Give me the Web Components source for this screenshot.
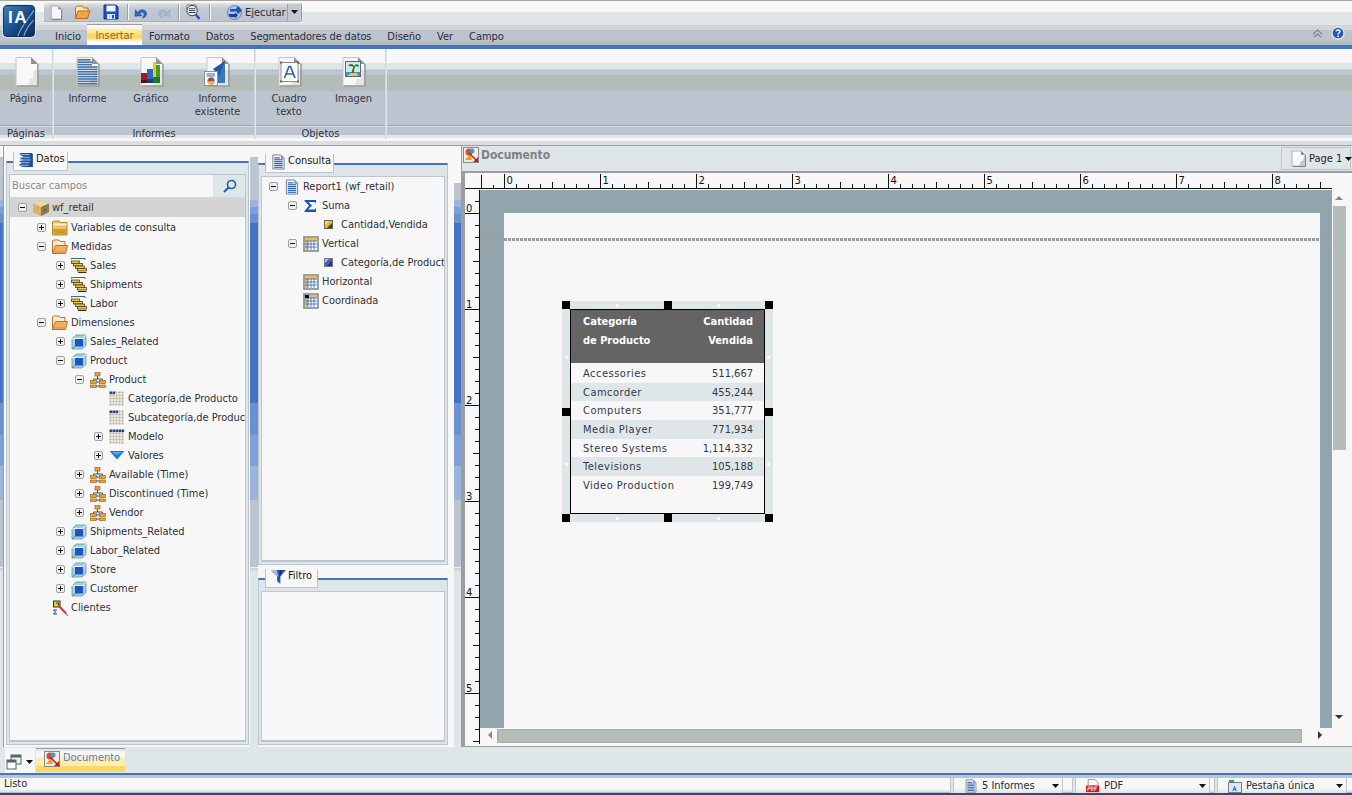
<!DOCTYPE html>
<html lang="es"><head><meta charset="utf-8"><title>InfoAssist</title>
<style>
html,body{margin:0;padding:0;background:#dfe6e8;overflow:hidden}
body{font:11px "DejaVu Sans",sans-serif;font-stretch:condensed;color:#2b2b33;letter-spacing:-.03px}
</style></head><body>
<ia-app>
  <ia-titlebar></ia-titlebar>
  <ia-ribbon></ia-ribbon>
  <ia-main>
    <ia-panel slot="left" heading="Datos" icon="db" tabw="55" search style="width:243px;margin-top:15px;height:584px">
      <ia-tree-row level="0" exp="minus" icon="cubeTan" selected>wf_retail</ia-tree-row>
      <ia-tree-row level="1" exp="plus" icon="folder">Variables de consulta</ia-tree-row>
      <ia-tree-row level="1" exp="minus" icon="folderOpen">Medidas</ia-tree-row>
      <ia-tree-row level="2" exp="plus" icon="measure">Sales</ia-tree-row>
      <ia-tree-row level="2" exp="plus" icon="measure">Shipments</ia-tree-row>
      <ia-tree-row level="2" exp="plus" icon="measure">Labor</ia-tree-row>
      <ia-tree-row level="1" exp="minus" icon="folderOpen">Dimensiones</ia-tree-row>
      <ia-tree-row level="2" exp="plus" icon="cubeBlue">Sales_Related</ia-tree-row>
      <ia-tree-row level="2" exp="minus" icon="cubeBlue">Product</ia-tree-row>
      <ia-tree-row level="3" exp="minus" icon="hier">Product</ia-tree-row>
      <ia-tree-row level="4" icon="lvl1">Categoría,de Producto</ia-tree-row>
      <ia-tree-row level="4" icon="lvl2">Subcategoría,de Producto</ia-tree-row>
      <ia-tree-row level="4" exp="plus" icon="lvl3">Modelo</ia-tree-row>
      <ia-tree-row level="4" exp="plus" icon="tri">Valores</ia-tree-row>
      <ia-tree-row level="3" exp="plus" icon="hier">Available (Time)</ia-tree-row>
      <ia-tree-row level="3" exp="plus" icon="hier">Discontinued (Time)</ia-tree-row>
      <ia-tree-row level="3" exp="plus" icon="hier">Vendor</ia-tree-row>
      <ia-tree-row level="2" exp="plus" icon="cubeBlue">Shipments_Related</ia-tree-row>
      <ia-tree-row level="2" exp="plus" icon="cubeBlue">Labor_Related</ia-tree-row>
      <ia-tree-row level="2" exp="plus" icon="cubeBlue">Store</ia-tree-row>
      <ia-tree-row level="2" exp="plus" icon="cubeBlue">Customer</ia-tree-row>
      <ia-tree-row level="1" icon="key">Clientes</ia-tree-row>
    </ia-panel>
    <ia-panel slot="mid" heading="Consulta" icon="report" tabw="69" style="width:190px;margin-top:17px;height:402px">
      <ia-tree-row base="7" level="0" exp="minus" icon="report">Report1 (wf_retail)</ia-tree-row>
      <ia-tree-row base="7" level="1" exp="minus" icon="sigma">Suma</ia-tree-row>
      <ia-tree-row base="7" level="2" icon="fieldY">Cantidad,Vendida</ia-tree-row>
      <ia-tree-row base="7" level="1" exp="minus" icon="matrix">Vertical</ia-tree-row>
      <ia-tree-row base="7" level="2" icon="fieldB">Categoría,de Producto</ia-tree-row>
      <ia-tree-row base="7" level="1" icon="matrix">Horizontal</ia-tree-row>
      <ia-tree-row base="7" level="1" icon="matrixK">Coordinada</ia-tree-row>
    </ia-panel>
    <ia-panel slot="mid" heading="Filtro" icon="funnel" tabw="53" style="width:190px;margin-top:13px;height:167px"></ia-panel>
    <ia-document slot="doc"><ia-report></ia-report></ia-document>
  </ia-main>
  <ia-taskbar></ia-taskbar>
  <ia-status></ia-status>
</ia-app>
<script>
const pageBase=(x='')=>`<path d="M3 1.5H18L24.5 8V29.5H3Z" fill="#f8f8f8" stroke="#c4c6c8"/><path d="M15 29 17 23H20L21 14H24V29Z" fill="#e2e3e5"/><path d="M18 1 25 8H18Z" fill="#8f9498"/><path d="M25 8V30H4" fill="none" stroke="#8d8f91" stroke-width="1.2"/>${x}`;
const ICONS={
 page:['0 0 27 32',pageBase()],
 informe:['0 0 27 32',pageBase(Array.from({length:11},(_,i)=>`<rect x="3.5" y="${3+i*2.4}" width="${i<1?13:i<3?14.5:20}" height="1.6" fill="#4672a8"/>`).join(''))],
 grafico:['0 0 27 32',pageBase(`<rect x="3" y="17" width="6" height="10" fill="#a01818"/><rect x="3" y="24" width="6" height="3" fill="#5a1010"/><rect x="9" y="13" width="6" height="14" fill="#2a66c8"/><rect x="9" y="23" width="6" height="4" fill="#17407e"/><rect x="15" y="6" width="3" height="21" fill="#e8c820"/><rect x="18" y="9" width="4" height="18" fill="#3aa028"/><rect x="15" y="21" width="7" height="6" fill="#1f7a20"/>`)],
 existente:['0 0 27 32',pageBase(`<path d="M21 5V27H13L11 13Z" fill="#3a78c0"/><path d="M9 13 21 5 15 20Z" fill="#1e5aa0"/><rect x="0.5" y="15.5" width="13" height="14" fill="#fff" stroke="#8d8f91"/><path d="M2.5 18H11M2.5 20H11" stroke="#2a62a8"/><circle cx="7" cy="25" r="3.5" fill="#d83020"/><path d="M7 25V21.5A3.5 3.5 0 0 1 10.5 25Z" fill="#3070c0"/><path d="M7 25H3.5A3.5 3.5 0 0 0 10.5 25Z" fill="#e8b830"/>`)],
 cuadro:['0 0 27 32',pageBase(`<rect x="5" y="6.5" width="17" height="19" fill="#fff" stroke="#8a8a8a"/><rect x="4" y="5.5" width="2" height="2" fill="#666"/><rect x="21" y="5.5" width="2" height="2" fill="#666"/><rect x="4" y="24.5" width="2" height="2" fill="#666"/><rect x="21" y="24.5" width="2" height="2" fill="#666"/><path d="M8.5 22 13 10.5h1.5L19 22M10.5 18h6.5" fill="none" stroke="#2d62b0" stroke-width="1.7"/>`)],
 imagen:['0 0 27 32',pageBase(`<rect x="5.5" y="5.5" width="15" height="15" fill="#cfe8f4" stroke="#666"/><rect x="6" y="16" width="14" height="4" fill="#27a0b8"/><path d="M11.5 17C12 14 13 12 13.5 10L15 10.5C14.5 13 14 15 13.5 18Z" fill="#8a4a18"/><path d="M8 10C10 7 13 8 14 10 16 7 19 8 19 11 17 10 15 10 14 11 12 10 10 10 8 10Z" fill="#1e8a2c"/><path d="M7 20 11 17H17L18 20Z" fill="#e8c870"/>`)],
 tnew:['0 0 16 18',`<path d="M2.5 1.5H10.5L14.5 5.5V16.5H2.5Z" fill="#f8f8f8" stroke="#a0a2a4"/><path d="M10.5 1.5V5.5H14.5Z" fill="#8f9498"/><path d="M14.5 6V17H3" fill="none" stroke="#77797b"/>`],
 topen:['0 0 17 17',`<path d="M1.5 14.5V3.5L3 2H8L9.5 4H14V7" fill="#f8e4b8" stroke="#c06a18"/><path d="M1.5 14.5 4 7H16L13.5 14.5Z" fill="#f3a640" stroke="#c06a18"/>`],
 tsave:['0 0 16 16',`<path d="M1 1H13L15 3V15H1Z" fill="#1e50c8" stroke="#10308a"/><rect x="3.5" y="1.5" width="9" height="6" fill="#f4f6fa"/><rect x="4" y="10" width="8" height="5" fill="#d9dfe8"/><rect x="9" y="11" width="2" height="3.5" fill="#1e50c8"/>`],
 tundo:['0 0 15 14',`<path d="M4 7.5C5 3.5 11 3 13 6.5 14.5 9.5 12 12.5 9 13 11 11 11.5 8 9.5 7 8 6.3 7 7 6.5 8.5L8.5 10.5 1 11 1.5 4Z" fill="#2a6cc8" stroke="#15408a" stroke-width=".6"/>`],
 tredo:['0 0 15 14',`<path d="M11 7.5C10 3.5 4 3 2 6.5 .5 9.5 3 12.5 6 13 4 11 3.5 8 5.500 7 7 6.300 8 7 8.500 8.500L6.500 10.500 14 11 13.500 4Z" fill="#aab8cc" stroke="#98a4b4" stroke-width=".6"/>`],
 tfind:['0 0 17 18',`<path d="M2 1H12V5H2Z" fill="#fff" stroke="#777"/><circle cx="7.500" cy="7" r="5.500" fill="#eef3f8" stroke="#333"/><path d="M4 5H11M4 7H11M4 9H11" stroke="#2a3a60"/><path d="M11.500 11.500 15.500 16" stroke="#1e50a8" stroke-width="2.400"/>`],
 trun:['0 0 16 16',`<circle cx="7.500" cy="8.500" r="7" fill="#a8c4e8" stroke="#6a86a8"/><path d="M3 5H9L11 2 15 6.500 11 10 9.500 7.500H3Z" fill="#2050b8"/><path d="M1.500 10H8V8.500L11 11 8 14.500V13H3Z" fill="#1a3e98"/>`],
 help:['0 0 14 14',`<circle cx="7" cy="7" r="6" fill="#1d56c0" stroke="#dfe6e8" stroke-width="1.300"/><path d="M5 5.300C5.200 3.500 9 3.500 9 5.500 9 7 7 7 7 8.500" fill="none" stroke="#fff" stroke-width="1.500"/><rect x="6.200" y="9.500" width="1.600" height="1.600" fill="#fff"/>`],
 collapse:['0 0 11 9',`<path d="M1 5 5.500 1 10 5M2 8 5.500 5 9 8" fill="none" stroke="#7f8588" stroke-width="1.100"/>`],
 db:['0 0 14 15',`<path d="M1 1H12L13 2V14H5C2 14 0 13 0 12L3 10 0 9 4 7.500 1 6 4 4 1 3Z" fill="#1e4f9e"/><path d="M0 2.500H10M1 5H10M0 7.500H11M1 10H10M0 12.500H9" stroke="#9fc0ec" stroke-width=".9"/>`],
 cubeTan:['0 0 16 16',`<path d="M8 0 16 3.500V12L8 16 0 12V3.500Z" fill="#c4a460"/><path d="M8 0 16 3.500 8 7 0 3.500Z" fill="#ecd9a0"/><path d="M8 7V16L16 12V3.500Z" fill="#8a7a50"/><path d="M0 3.500V12L8 16V7Z" fill="#d6b468"/><circle cx="4" cy="8" r="1.500" fill="#e8a040"/><circle cx="12" cy="10" r="1" fill="#5a5030"/>`],
 folder:['0 0 16 16',`<path d="M.5 15V2L1.500 1H7L8 2.500H15V15Z" fill="#ecc064" stroke="#b88a28"/><rect x="1.500" y="3.500" width="13" height="2" fill="#fff1c8"/><rect x="1.500" y="9" width="13" height="5.500" fill="#d29c2c"/>`],
 folderOpen:['0 0 16 16',`<path d="M.5 14.500V2L1.500 1H7L8.500 2.500H13V7" fill="#f9ead0" stroke="#c0702a"/><path d="M.5 14.500 3.500 6.500H15.500L13.500 14.500Z" fill="#f0b060" stroke="#c0702a"/><path d="M2.500 13H12.500" stroke="#d88a3a"/>`],
 measure:['0 0 16 16',`<path d="M0 2V.5H14V2" fill="none" stroke="#3a6a8a"/><g fill="#eec84a" stroke="#3b2c08" stroke-width=".7"><rect x=".5" y="3" width="8" height="2.500"/><rect x="2.500" y="5.500" width="9" height="2.500"/><rect x="4.500" y="8" width="9" height="2.500"/><rect x="6.500" y="10.500" width="9" height="2.500"/></g><path d="M7 14.500H15.500" stroke="#3b2c08"/>`],
 cubeBlue:['0 0 16 16',`<path d="M1 5 5 1H15V11.500L11 15H1Z" fill="#9fd4de" stroke="#4e8c9c" stroke-width=".7"/><rect x="4" y="4.500" width="8" height="8" fill="#2450c8"/><path d="M1 15 4 12.500" stroke="#2a9a9a"/><path d="M1 5 4 4.500H12L15 1" fill="none" stroke="#e7f6f8"/>`],
 hier:['0 0 16 16',`<rect x="5" y=".5" width="5" height="3.500" fill="#f0a030" stroke="#8a5a10" stroke-width=".6"/><path d="M7.500 4V7M3.500 7H12.500V8.500M3.500 7V8.500" fill="none" stroke="#2a5090"/><g fill="#f0a030" stroke="#8a5a10" stroke-width=".6"><rect x=".5" y="8.500" width="6" height="3"/><rect x="9.500" y="8.500" width="6" height="3"/><rect x=".5" y="13" width="6" height="2.500"/><rect x="9.500" y="13" width="6" height="2.500"/></g><path d="M6.500 10H9.500M6.500 14H9.500" stroke="#2a5090"/>`],
 lvl1:['0 0 15 16',grid(0)],lvl2:['0 0 15 16',grid(1)],lvl3:['0 0 15 16',grid(3)],
 tri:['0 0 15 16',`<path d="M0 3H15L7.500 11.500Z" fill="#1e78e0"/><path d="M2 4H13L7.500 7Z" fill="#4ea8f4"/>`],
 key:['0 0 16 16',`<rect x="1.500" y="1" width="6.500" height="6" fill="#e8d020" stroke="#333"/><path d="M4 3H6.500V5.500" fill="none" stroke="#333"/><path d="M7 6 14 13.500" stroke="#c04040" stroke-width="2"/><path d="M14 13.500 15.500 15.500" stroke="#333"/><path d="M1.500 10H5M1.500 14H5M1.500 10 3.500 12 1.500 14" fill="none" stroke="#1a3a9a" stroke-width="1"/>`],
 report:['0 0 15 17',`<path d="M1.500 1H10L13.500 4.500V16H1.500Z" fill="#f4f6fa" stroke="#7a7e84"/><path d="M10 1 14 5H10Z" fill="#8f9498"/>${Array.from({length:6},(_,i)=>`<rect x="3" y="${3.500+i*2}" width="${i<1?6:9}" height="1.200" fill="#2a62c0"/>`).join('')}`],
 sigma:['0 0 13 13',`<path d="M.5 1H12V4.500L10.500 3H4.500L8 6.500 4 10.500H10.500L12 9V13H.5V12L5 6.500.5 2Z" fill="#1554c0"/>`],
 fieldY:['0 0 9 9',`<rect x=".5" y=".5" width="8" height="8" fill="#e8c018" stroke="#666"/><path d="M1 8V5L5 1H1Z" fill="#f6e26a"/><path d="M3 8 8 3V8Z" fill="#4a3c06"/>`],
 fieldB:['0 0 9 9',`<rect x=".5" y=".5" width="8" height="8" fill="#3a62b4" stroke="#778"/><path d="M1 8V5L5 1H1Z" fill="#a6c0ea"/><path d="M3 8 8 3V8Z" fill="#1c3470"/>`],
 matrix:['0 0 16 16',tbl('#ecc050')],
 matrixK:['0 0 16 16',tbl('#ecc050',1)],
 funnel:['0 0 16 17',`<path d="M0 1H16L10 8V16L6.500 13V8Z" fill="#2858b8"/><path d="M0 1H6L8 8 6.500 8Z" fill="#aabbcc"/><path d="M9 1H12L9 10Z" fill="#102e78"/>`],
 docIcon:['0 0 16 16',`<rect x=".5" y=".5" width="15" height="15" fill="#f2ede0" stroke="#8a8a80"/><circle cx="6" cy="5" r="3.500" fill="#d84838"/><circle cx="9" cy="4" r="2.500" fill="#38a0c8"/><path d="M2 13 7 7 9 13Z" fill="#e8a020"/><path d="M6 6 15 15" stroke="#d01818" stroke-width="1.500"/><path d="M15 10V15H10Z" fill="#d01818"/>`],
 windows:['0 0 16 16',`<rect x="5" y="1" width="10" height="9" fill="#eef2f6" stroke="#566"/><rect x="5" y="1" width="10" height="2.500" fill="#566"/><rect x="1" y="6" width="9" height="9" fill="#fff" stroke="#566"/><rect x="1" y="6" width="9" height="2.500" fill="#566"/>`],
 pageSm:['0 0 15 17',`<path d="M1 1H10L14 5V16H1Z" fill="#fafafa" stroke="#b4b6b8"/><path d="M8 16 10 11H12L13 6H14V16Z" fill="#c6c8ca"/><path d="M10 1 14 5H10Z" fill="#8f9498"/><path d="M14.500 5V16.500H2" fill="none" stroke="#808284"/>`],
 pdf:['0 0 16 16',`<path d="M2.500 .5H10L13.500 4V8H2.500Z" fill="#fafafa" stroke="#8a8a8a"/><rect x="0" y="7.500" width="15" height="7.500" fill="#d81818"/><path d="M2 9H4.500V11H2V13.500M6 9H7.500L8 10V12L7.500 13H6ZM10 13.500V9H12.800M10 11H12" fill="none" stroke="#fff"/>`],
 tabIcon:['0 0 16 16',`<rect x="1" y="1" width="6" height="3" fill="#30b040"/><path d="M.5 4H15.500V15.500H.5Z" fill="#dce8f4" stroke="#5a6a80"/><path d="M5.500 14 7.500 8.500 9.500 14M6 12H9" fill="none" stroke="#2050b0"/>`],
};
function grid(k){let s='';for(let r=0;r<5;r++)for(let c=0;c<5;c++){const dark=r===0&&c<k+2;s+=`<rect x="${c*3}" y="${r*3+.5}" width="${dark?2.6:2}" height="${dark?2.6:2}" fill="${dark?'#26408a':'#b8ae8c'}"/>`}return s}
function tbl(c,k){let s=`<rect x="1" y="1" width="14" height="14" fill="#fff" stroke="#7f8a94" stroke-width="1.600"/><rect x="2" y="2" width="12" height="3" fill="${c}"/><rect x="2" y="5" width="3" height="9" fill="${c}"/>`;for(let i=1;i<4;i++)s+=`<path d="M${2+i*3} 5V14M2 ${2+i*3}H14" stroke="#2f62b8" stroke-width=".8"/>`;if(k)s+=`<rect x="2" y="2" width="4" height="3" fill="#111"/>`;return s}

function def(name,css,html,init){
 customElements.define(name,class extends HTMLElement{
  constructor(){super();const r=this.attachShadow({mode:'open'});r.innerHTML=`<style>${css}</style>${typeof html==='function'?html(this):html}`;if(init)init(this,r)}
 });
}
customElements.define('ia-icon',class extends HTMLElement{
 constructor(){super();this.attachShadow({mode:'open'})}
 connectedCallback(){const n=this.getAttribute('name'),w=this.getAttribute('w')||16,h=this.getAttribute('h')||w,[vb,b]=ICONS[n];
  this.shadowRoot.innerHTML=`<style>:host{display:inline-block;width:${w}px;height:${h}px;flex:none;line-height:0}svg{display:block}</style><svg xmlns="http://www.w3.org/2000/svg" width="${w}" height="${h}" viewBox="${vb}">${b}</svg>`}
});
def('ia-app',`:host{display:flex;flex-direction:column;width:1352px;height:795px;overflow:hidden}`,`<slot></slot>`);

const arrow=`<svg width="7" height="4" viewBox="0 0 7 4" style="display:block;flex:none"><path d="M0 0H7L3.500 4Z" fill="#111"/></svg>`;
def('ia-titlebar',`
:host{display:block;height:49px;position:relative;font-size:11px;
 background:linear-gradient(#a8a8a0 0 1px,#f7f7f7 1px 12px,#dfe6e8 12px 25px,#cdd3d8 25px 26px,#d4d4d4 26px 30px,#bcc4cf 30px 41px,#b4bcb8 41px 45px,#4472c4 45px 49px)}
.logo{position:absolute;left:3px;top:5px;width:32px;height:32px;box-sizing:border-box;border-radius:4px;border:1px solid #12325a;
 background:linear-gradient(135deg,#3d80bd,#174a88 55%,#0e2d5c);box-shadow:0 0 0 1px #dfe6e8;color:#fff;font:bold 17px/24px "Liberation Sans",sans-serif;letter-spacing:1.500px;padding-left:4px;overflow:hidden}
.logo svg{position:absolute;left:0;top:0}
.logo span{position:relative}
.qa{display:flex;align-items:center;position:absolute;left:44px;top:3px;width:258px;height:19px;box-sizing:border-box;background:linear-gradient(#dfe6e8,#c2c9d2 30%,#bcc4cf);border-radius:3px 3px 3px 0;border-right:1px solid #9a9ea0;border-bottom:1px solid #a9b0b8;padding-left:5px}
.sep{width:1px;height:16px;background:#f7f7f7;border-left:1px solid #9aa2a8;flex:none}
.dd{margin-left:1px;width:14px;height:17px;display:flex;align-items:center;justify-content:center;background:#c2c9d2;border-left:1px solid #9aa2a8}
nav{display:flex;position:absolute;left:47px;top:24px;height:21px;align-items:flex-end}
nav span{padding:0 8px 1px;line-height:14px;white-space:nowrap}
nav span.on{box-sizing:border-box;margin:0 -1px 0 -2px;width:55px;padding:5px 0 2px;height:21px;color:#8f6d22;background:linear-gradient(#9a9ea0 0 1px,#f7f7f7 1px 3px,#fbeeb0 6px,#f8d868 11px,#f8d868 14px,#fff 18px,#fff);text-align:center}
nav span.seg{letter-spacing:-.14px}
.right{position:absolute;right:7px;top:26px;display:flex;gap:8px;align-items:center}
`,`<div class="logo"><svg width="30" height="30" viewBox="0 0 30 30"><path d="M14 30C17 20 24 14 30 4M20 30C22 22 26 18 30 14" fill="none" stroke="#7f9fc4" stroke-width="1.200"/></svg><span>IA</span></div>
<div class="qa">
<ia-icon name="tnew" w="14" h="17"></ia-icon><ia-icon name="topen" w="17" style="margin-left:11px"></ia-icon><ia-icon name="tsave" w="16" style="margin-left:12px"></ia-icon>
<span class="sep" style="margin-left:8px"></span><ia-icon name="tundo" w="14" h="13" style="margin-left:5px"></ia-icon><ia-icon name="tredo" w="14" h="13" style="margin-left:9px"></ia-icon>
<span class="sep" style="margin-left:7px"></span><ia-icon name="tfind" w="16" h="17" style="margin-left:5px"></ia-icon>
<span class="sep" style="margin-left:8px"></span><ia-icon name="trun" w="16" style="margin-left:16px"></ia-icon><span style="margin-left:2px">Ejecutar</span><span class="dd">${arrow}</span></div>
<nav><span>Inicio</span><span class="on">Insertar</span><span>Formato</span><span>Datos</span><span class="seg">Segmentadores de datos</span><span>Diseño</span><span>Ver</span><span>Campo</span></nav>
<div class="right"><ia-icon name="collapse" w="11" h="9"></ia-icon><ia-icon name="help" w="14"></ia-icon></div>`);

def('ia-ribbon-item',`:host{display:flex;flex-direction:column;align-items:center;flex:none;padding-top:7px;box-sizing:border-box;text-align:center;line-height:13px;color:#33363c}
.t{margin-top:4px}`,h=>`<ia-icon name="${h.getAttribute('icon')}" w="27" h="32"></ia-icon><div class="t"><slot></slot></div>`,(h)=>{h.style.width=h.getAttribute('w')+'px'});
def('ia-ribbon-group',`:host{display:flex;flex-direction:column;flex:none;height:90px;border-right:1px solid #cfd5da;box-shadow:1px 0 0 #dfe6e8;margin-right:1px}
.items{display:flex;height:78px}.l{height:12px;text-align:center;line-height:13px;margin-top:0;color:#33363c}`,h=>`<div class="items"><slot></slot></div><div class="l">${h.getAttribute('label')}</div>`);
def('ia-ribbon',`:host{display:flex;height:96px;box-sizing:border-box;align-items:flex-start;
 background:linear-gradient(#f7f7f7 0 14px,#dfe6e8 14px 20px,#ccd2d8 20px 21px,#bcc4cf 21px 26px,#b4bcb8 26px 42px,#bcc4cf 42px 76px,#8fa5d8 76px 77px,#d4dae0 77px 78px,#bcc4cf 78px 86px,#dfe6e8 86px 89px,#f7f7f7 89px 92px,#d8dee2 92px 96px)}`,
`<ia-ribbon-group label="Páginas"><ia-ribbon-item icon="page" w="52">Página</ia-ribbon-item></ia-ribbon-group>
<ia-ribbon-group label="Informes"><ia-ribbon-item icon="informe" w="67">Informe</ia-ribbon-item><ia-ribbon-item icon="grafico" w="60">Gráfico</ia-ribbon-item><ia-ribbon-item icon="existente" w="73">Informe<br>existente</ia-ribbon-item></ia-ribbon-group>
<ia-ribbon-group label="Objetos"><ia-ribbon-item icon="cuadro" w="66">Cuadro<br>texto</ia-ribbon-item><ia-ribbon-item icon="imagen" w="63">Imagen</ia-ribbon-item></ia-ribbon-group>`);

def('ia-main',`:host{display:flex;height:602px;border-top:1px solid #9a9ea0;box-sizing:border-box;
 background:linear-gradient(#f7f7f7 0 11px,#bcc4cf 11px 54px,#9ab4dc 54px 61px,#7f9fd8 61px 68px,#6a90d0 68px 77px,#4472c4 77px 257px,#6a90d0 257px 289px,#7f9fd8 289px 320px,#9ab4dc 320px 354px,#bcc4cf 354px 421px,#f0f3f4 421px 422px,#cfd5da 422px 425px,#dfe6e8 425px)}
.left{margin-left:3px;border-left:1px solid #9a9ea0;padding:0 1px 0 2px;display:flex;background:#f7f7f7;height:100%;box-sizing:border-box;flex:none}
.mid{margin-left:8px;display:flex;flex-direction:column;width:196px;flex:none;background:#f7f7f7}
.rs{width:7px;flex:none;background:linear-gradient(#f7f7f7 0 37px,transparent 37px)}
.doc{flex:1;min-width:0;display:flex}`,`<div class="left"><slot name="left"></slot></div><div class="mid"><slot name="mid"></slot></div><div class="rs"></div><div class="doc"><slot name="doc"></slot></div>`);

def('ia-panel',`:host{display:flex;flex-direction:column;position:relative;box-sizing:border-box;flex:none;background:#dfe6e8;border:1px solid #bcc5ce;border-top:2px solid #4472c4;padding:0 2px 2px}
.tab{position:absolute;left:6px;top:-11px;height:19px;box-sizing:border-box;background:#f7f7f7;border:1px solid #bcc5ce;border-top:0;display:flex;align-items:flex-start;padding-left:5px;gap:2px;z-index:1;color:#222;line-height:14px}
.band{height:11px;flex:none}
.box{flex:1;min-height:0;background:#f7f7f7;border:1px solid #bcc5ce;overflow:hidden;border-bottom-width:2px}
.search{display:flex;height:23px;box-sizing:border-box;background:#dfe6e8;border-bottom:1px solid #cfd5da}
.search div{flex:1;margin-right:1px;background:#f7f7f7;color:#8a8a8a;padding-left:2px;line-height:22px}
.search span{width:31px;display:flex;align-items:center;justify-content:center;background:#dfe6e8}
`,h=>`<div class="tab" style="width:${h.getAttribute('tabw')}px"><ia-icon name="${h.getAttribute('icon')}" w="15" h="16"></ia-icon><span>${h.getAttribute('heading')}</span></div><div class="band"></div>
<div class="box">${h.hasAttribute('search')?`<div class="search"><div>Buscar campos</div><span><svg width="14" height="14" viewBox="0 0 14 14"><circle cx="8.500" cy="5.500" r="4" fill="none" stroke="#1e5ab0" stroke-width="1.600"/><path d="M5.500 8.500 1 13" stroke="#1e5ab0" stroke-width="2"/></svg></span></div>`:''}<slot></slot></div>`);

def('ia-tree-row',`:host{display:flex;align-items:center;height:19px;white-space:nowrap;color:#2f3238;padding-left:var(--pl);box-sizing:border-box}
:host([selected]){background:#d4d4d4;margin-bottom:1px}
.x{width:9px;height:9px;box-sizing:border-box;flex:none;margin-right:6px;border:1px solid #9ea0a2;border-radius:2px;background:#eee;position:relative}
.x.n{visibility:hidden}
.x::before{content:"";position:absolute;left:1px;top:3px;width:5px;height:1px;background:#111}
.x.plus::after{content:"";position:absolute;left:3px;top:1px;width:1px;height:5px;background:#111}
ia-icon{margin-right:3px}`,
h=>{const e=h.getAttribute('exp'),i=h.getAttribute('icon');
 const small=i==='fieldY'||i==='fieldB',sig=i==='sigma';
 return `<span class="x ${e||'n'}"></span><ia-icon name="${i}" w="${small?9:sig?13:16}" h="${small?9:sig?13:16}" style="${small?'margin:0 8px 0 2px':sig?'margin:0 5px 0 1px':''}"></ia-icon><span><slot></slot></span>`},
h=>{h.style.setProperty('--pl',((+(h.getAttribute('base')||8))+19*(+h.getAttribute('level')))+'px')});

function hRuler(){let s='<svg width="883" height="17" viewBox="0 0 883 17" style="display:block;font:10px \'DejaVu Sans\',sans-serif"><rect width="883" height="17" fill="#f7f7f7"/><path d="M0 15.500H867" stroke="#111"/><g transform="translate(15 0)"><path d="M1.500 2V15" stroke="#111"/><path d="M13.500 12V15" stroke="#111"/>';
 for(let i=0;i*12+24<852;i++){const x=24+i*12+.5,m=i%8===0,h=i%4===0;s+=`<path d="M${x} ${m?1:h?9:11}V15" stroke="#111"/>`;if(m)s+=`<text x="${x+2}" y="11" fill="#111">${i/8}</text>`}
 return s+'</g></svg>'}
function vRuler(){let s='<svg width="15" height="554" viewBox="0 0 15 554" style="display:block;font:10px \'DejaVu Sans\',sans-serif"><rect width="15" height="554" fill="#f7f7f7"/><path d="M14.500 0V554" stroke="#111"/>';
 for(let i=-1;i*12+23<554;i++){const y=23+i*12+.5,m=i%8===0,h=i%4===0;s+=`<path d="M${m?0:h?8:10} ${y}H15" stroke="#111"/>`;if(m)s+=`<text x="1" y="${y-2}" fill="#111">${i/8}</text>`}
 return s+'</svg>'}
def('ia-document',`:host{display:flex;flex-direction:column;flex:1;min-width:0}
.head{display:flex;height:25px;box-sizing:border-box;border-left:1px solid #9a9ea0;background:#dfe6e8;padding-left:1px;align-items:flex-start}
.title{display:flex;gap:2px;align-items:center;height:17px;font-weight:bold;font-size:12px;color:#7d8286;flex:1}
.page{display:flex;align-items:center;width:70px;height:23px;box-sizing:border-box;margin:1px 1px 0 0;border:1px solid #bcc5ce;padding-left:9px;color:#1d2430;gap:3px;white-space:nowrap;flex:none}
.body{flex:1;min-height:0;display:grid;grid-template-columns:15px 852px 16px 1fr;grid-template-rows:17px 538px 15px 1fr;border-left:4px solid #9a9ea0;border-top:2px solid #9a9ea0;background:#f7f7f7;box-sizing:border-box;border-bottom:1px solid #9a9ea0}
.hr{grid-column:1/5;grid-row:1;overflow:hidden}.vr{grid-column:1;grid-row:2/5;overflow:hidden}
.canvas{grid-column:2;grid-row:2;position:relative;background:#92a4ac;overflow:hidden}
.sheet{position:absolute;left:24px;top:23px;width:816px;bottom:0;background:#f7f7f7}
.dots{position:absolute;left:0;right:0;top:48px;height:3px;background:repeating-linear-gradient(90deg,#9a9ea2 0 3px,transparent 3px 4px)}
.vs{grid-column:3;grid-row:2;position:relative;background:#f7f7f7}
.vs .thumb{position:absolute;left:1px;top:16px;width:13px;height:244px;background:#b4bcb8}
.a{position:absolute;width:0;height:0;border:4px solid transparent}
.hs{grid-column:2;grid-row:3;position:relative;background:#f7f7f7}
.hs .thumb{position:absolute;left:17px;top:1px;width:803px;height:12px;background:#b4bcb8;border:1px solid #a8aaa8;box-sizing:content-box}
`,`<div class="head"><div class="title"><ia-icon name="docIcon" w="16"></ia-icon><span>Documento</span></div><div class="page"><ia-icon name="pageSm" w="15" h="17"></ia-icon><span>Page 1</span>${arrow}</div></div>
<div class="body"><div class="hr">${hRuler()}</div><div class="vr">${vRuler()}</div>
<div class="canvas"><div class="sheet"></div><div class="dots"></div><slot></slot></div>
<div class="vs"><span class="a" style="left:3px;top:2px;border-bottom-color:#888"></span><div class="thumb"></div><span class="a" style="left:3px;top:525px;border-top-color:#333"></span></div>
<div class="hs"><span class="a" style="left:4px;top:3px;border-right-color:#888"></span><div class="thumb"></div><span class="a" style="left:838px;top:3px;border-left-color:#333"></span></div>
</div>`);

def('ia-report',`:host{display:block;position:absolute;left:82px;top:111px;width:211px;height:221px;background:#dfe6e8;font-size:11px}
.h{position:absolute;width:8px;height:8px;background:#000}
.d{position:absolute;width:3px;height:3px;background:#f7f7f7}
.f{position:absolute;left:8px;top:8px;width:195px;height:205px;box-sizing:border-box;border:1px solid #000;background:#f7f7f7}
.head{display:flex;justify-content:space-between;height:53px;background:#646464;color:#fff;font-weight:bold;padding:2px 11px 0 12px;box-sizing:border-box;line-height:19px}
.head div:last-child{text-align:right}
.r{display:flex;justify-content:space-between;padding:0 11px 0 12px;line-height:20px;height:18.700px;color:#33384a;letter-spacing:.5px}
.r span:last-child{letter-spacing:0}
.r:nth-child(even){background:#dfe6e8}
.rows{margin-top:1px}
`,`<i class="h" style="left:0;top:0"></i><i class="h" style="left:102px;top:0"></i><i class="h" style="left:203px;top:0"></i>
<i class="h" style="left:0;top:107px"></i><i class="h" style="left:203px;top:107px"></i>
<i class="h" style="left:0;top:213px"></i><i class="h" style="left:102px;top:213px"></i><i class="h" style="left:203px;top:213px"></i>
<i class="d" style="left:54px;top:3px"></i><i class="d" style="left:155px;top:3px"></i><i class="d" style="left:54px;top:216px"></i><i class="d" style="left:155px;top:216px"></i><i class="d" style="left:3px;top:55px"></i><i class="d" style="left:205px;top:55px"></i><i class="d" style="left:3px;top:162px"></i><i class="d" style="left:205px;top:162px"></i>
<div class="f"><div class="head"><div>Categoría<br>de Producto</div><div>Cantidad<br>Vendida</div></div>
<div class="rows"><div class="r"><span>Accessories</span><span>511,667</span></div><div class="r"><span>Camcorder</span><span>455,244</span></div><div class="r"><span>Computers</span><span>351,777</span></div><div class="r"><span>Media Player</span><span>771,934</span></div><div class="r"><span>Stereo Systems</span><span>1,114,332</span></div><div class="r"><span>Televisions</span><span>105,188</span></div><div class="r"><span>Video Production</span><span>199,749</span></div></div></div>`);

def('ia-taskbar',`:host{display:flex;height:26px;background:#dfe6e8;align-items:flex-start;padding:1px 0 0 5px;box-sizing:border-box}
.sw{display:flex;align-items:center;gap:4px;width:30px;height:25px;background:#f7f7f7;padding:3px 0 0 1px;box-sizing:border-box}
.tab{margin-left:1px;display:flex;align-items:flex-start;gap:3px;width:89px;height:24px;box-sizing:border-box;padding:3px 0 0 8px;color:#5b7fae;line-height:14px;background:linear-gradient(#9a9ea0 0 1px,#dfe6e8 1px 3px,#f7f7f7 3px 9px,#fbeeb0 9px 18px,#f8d868 18px)}`,
`<div class="sw"><ia-icon name="windows" w="16"></ia-icon>${arrow}</div><div class="tab"><ia-icon name="docIcon" w="16"></ia-icon><span>Documento</span></div>`);

def('ia-select',`:host{display:flex;align-items:center;box-sizing:border-box;height:15px;padding:0 3px 0 10px;background:linear-gradient(#f7f7f7 60%,#dfe6e8);border-left:1px solid #bcc5ce;border-right:1px solid #bcc5ce;flex:none;box-shadow:-2px 0 0 #dfe6e8,-3px 0 0 #bcc5ce}
.t{flex:1;margin-left:4px;white-space:nowrap}`,h=>`<ia-icon name="${h.getAttribute('icon')}" w="14" h="14"></ia-icon><span class="t"><slot></slot></span>${arrow}`,h=>{h.style.width=h.getAttribute('w')+'px'});
def('ia-status',`:host{display:flex;height:22px;box-sizing:border-box;align-items:center;padding:3px 5px 0 0;
 background:linear-gradient(#4472c4 0 2px,#bcc4cf 2px 5px,#f7f7f7 5px 17px,#dfe6e8 17px 19px,#b4bcc4 19px 20px,#2a4a90 20px 22px)}
.l{flex:1;padding:0 0 4px 4px}`,`<div class="l">Listo</div><ia-select icon="report" w="110">5 Informes</ia-select><ia-select icon="pdf" w="135" style="margin-left:12px">PDF</ia-select><ia-select icon="tabIcon" w="130" style="margin-left:7px">Pestaña única</ia-select>`);
</script>
</body></html>
